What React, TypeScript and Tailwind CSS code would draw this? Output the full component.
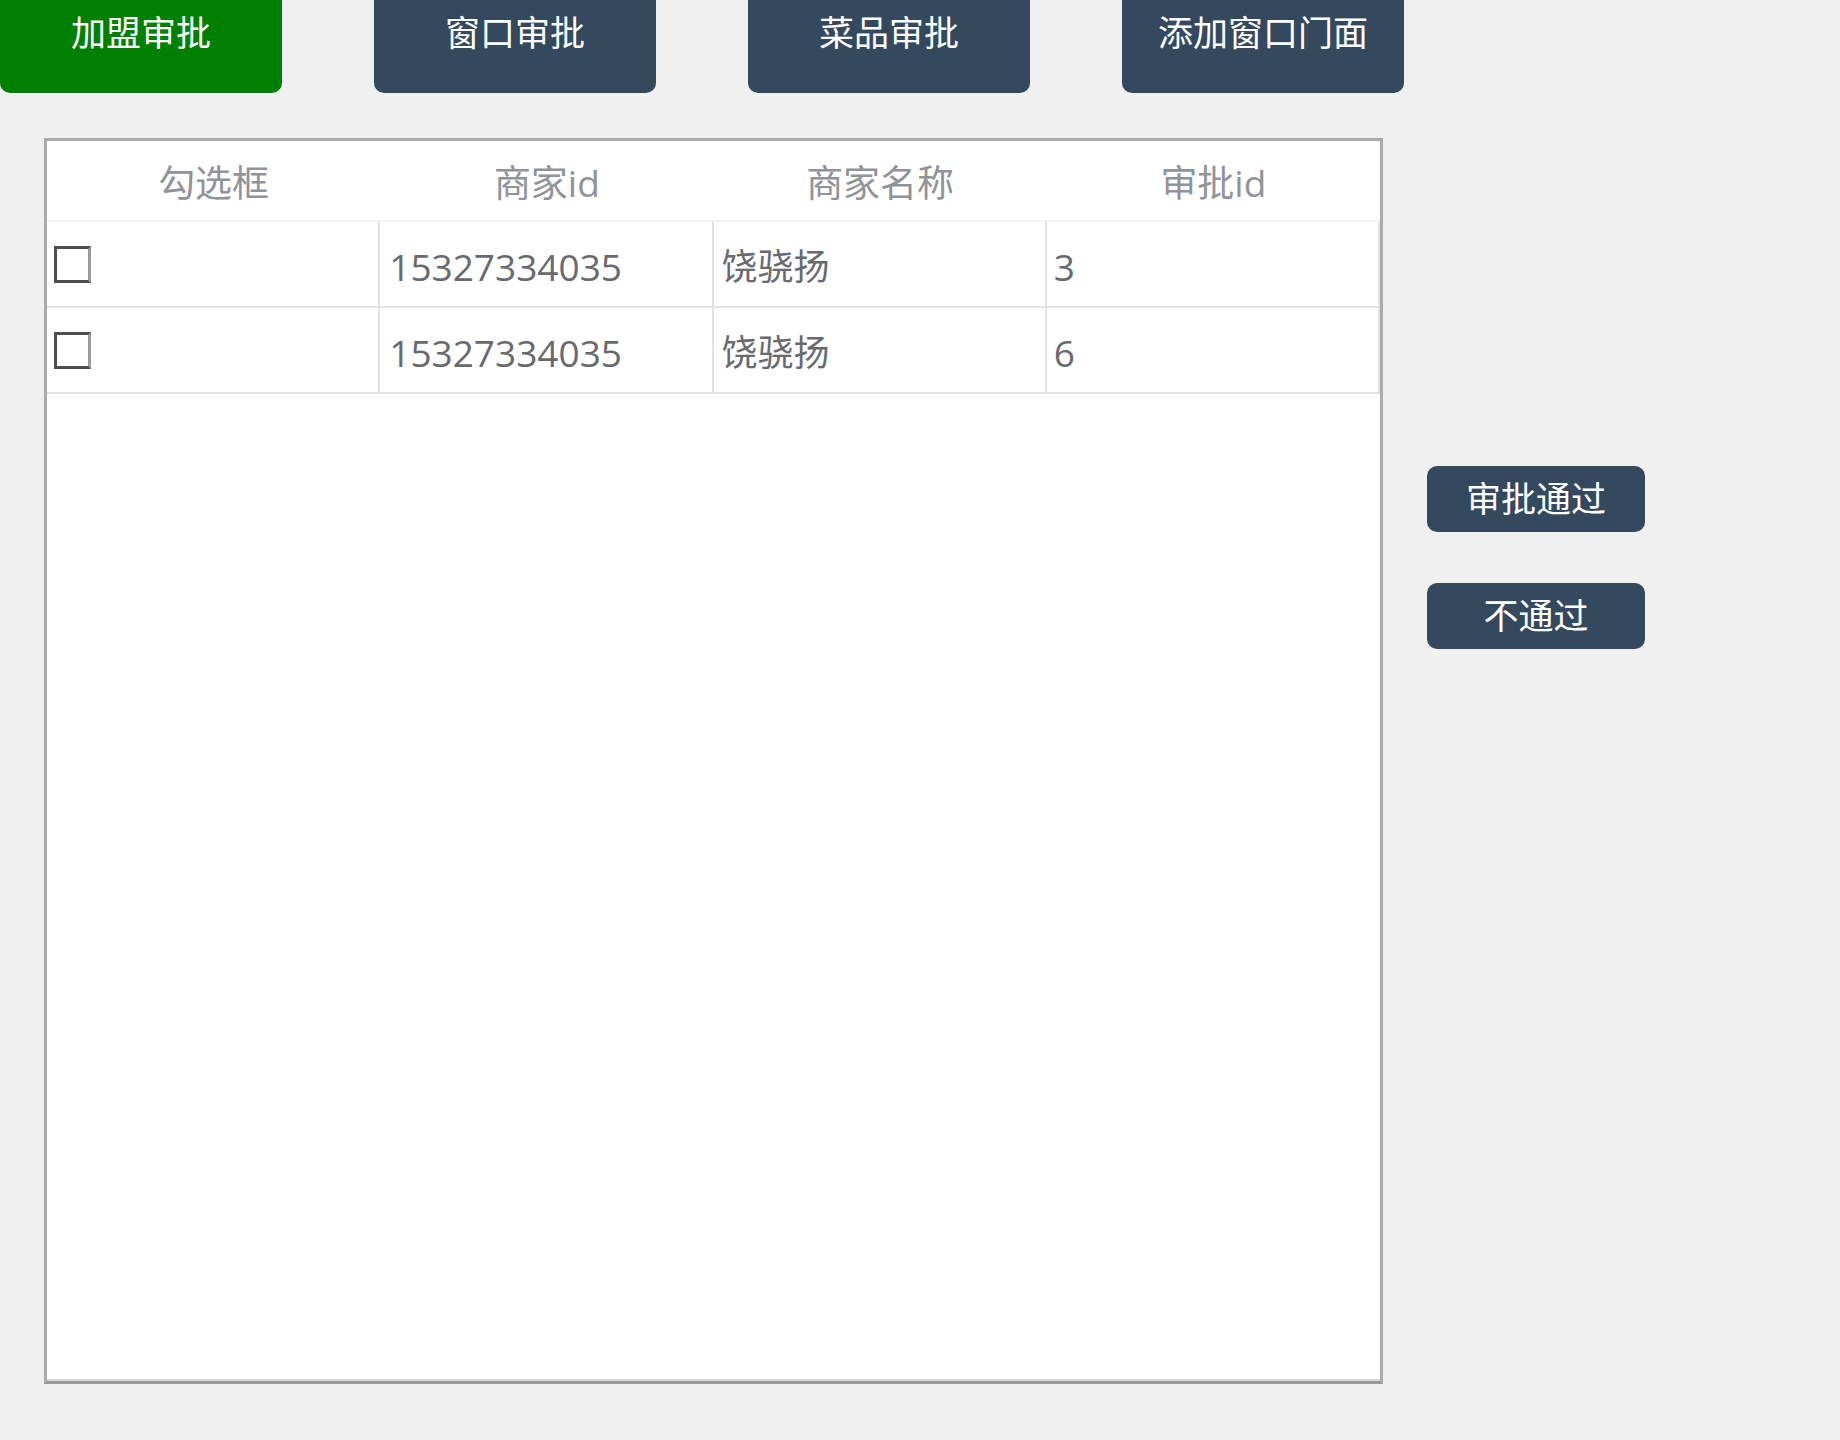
import React from "react";

const topButtons = [
  { label: "加盟审批", active: true },
  { label: "窗口审批", active: false },
  { label: "菜品审批", active: false },
  { label: "添加窗口门面", active: false },
];

const headers = ["勾选框", "商家id", "商家名称", "审批id"];

const rows = [
  { merchantId: "15327334035", name: "饶骁扬", approvalId: "3" },
  { merchantId: "15327334035", name: "饶骁扬", approvalId: "6" },
];

export default function App() {
  return (
    <div className="w-[1840px] h-[1440px] overflow-hidden bg-[#f0f0f0] font-['Open_Sans','Noto_Sans_CJK_SC',sans-serif]">
      <div className="flex gap-[92px] h-[93px]">
        {topButtons.map((b) => (
          <button
            key={b.label}
            className={
              "w-[282px] h-[120px] -mt-[27px] shrink-0 rounded-[10px] flex items-center justify-center text-[35px] text-white " +
              (b.active ? "bg-[#008000]" : "bg-[#34495e]")
            }
          >
            {b.label}
          </button>
        ))}
      </div>

      <div className="flex mt-[45px] ml-[44px]">
        <div className="w-[1339px] h-[1246px] bg-white border-[3px] border-[#ababab] border-b-[#999999] shrink-0">
          <div className="h-full flex flex-col border-b-2 border-[#d6d6d6]">
            <div className="grid grid-cols-4 h-[81px] border-b-2 border-[#f0f1f5]">
              {headers.map((h) => (
                <div
                  key={h}
                  className="flex items-center justify-center pt-[5px] text-[37px] text-[#909399]"
                >
                  {h}
                </div>
              ))}
            </div>
            {rows.map((r, i) => (
              <div
                key={i}
                className="grid grid-cols-4 h-[86px] border-b-2 border-[#e2e2e2]"
              >
                <div className="flex items-center border-r-2 border-[#e2e2e2]">
                  <div className="ml-[7px] w-[37px] h-[37px] bg-white border-[3px] border-[#4f4f4f] border-r-[#9a9a9a]" />
                </div>
                <div className="flex items-center pl-[9px] pt-[6px] border-r-2 border-[#e2e2e2] text-[37px] text-[#686a70]">
                  {r.merchantId}
                </div>
                <div className="flex items-center pl-[8px] pt-[6px] border-r-2 border-[#e2e2e2] text-[36px] text-[#686a70]">
                  {r.name}
                </div>
                <div className="flex items-center pl-[7px] pt-[6px] border-r-2 border-[#e2e2e2] text-[37px] text-[#686a70]">
                  {r.approvalId}
                </div>
              </div>
            ))}
            <div className="flex-1" />
          </div>
        </div>

        <div className="ml-[44px] pt-[328px] flex flex-col gap-[51px]">
          <button className="w-[218px] h-[66px] rounded-[10px] bg-[#34495e] text-white text-[35px] flex items-center justify-center">
            审批通过
          </button>
          <button className="w-[218px] h-[66px] rounded-[10px] bg-[#34495e] text-white text-[35px] flex items-center justify-center">
            不通过
          </button>
        </div>
      </div>
    </div>
  );
}
